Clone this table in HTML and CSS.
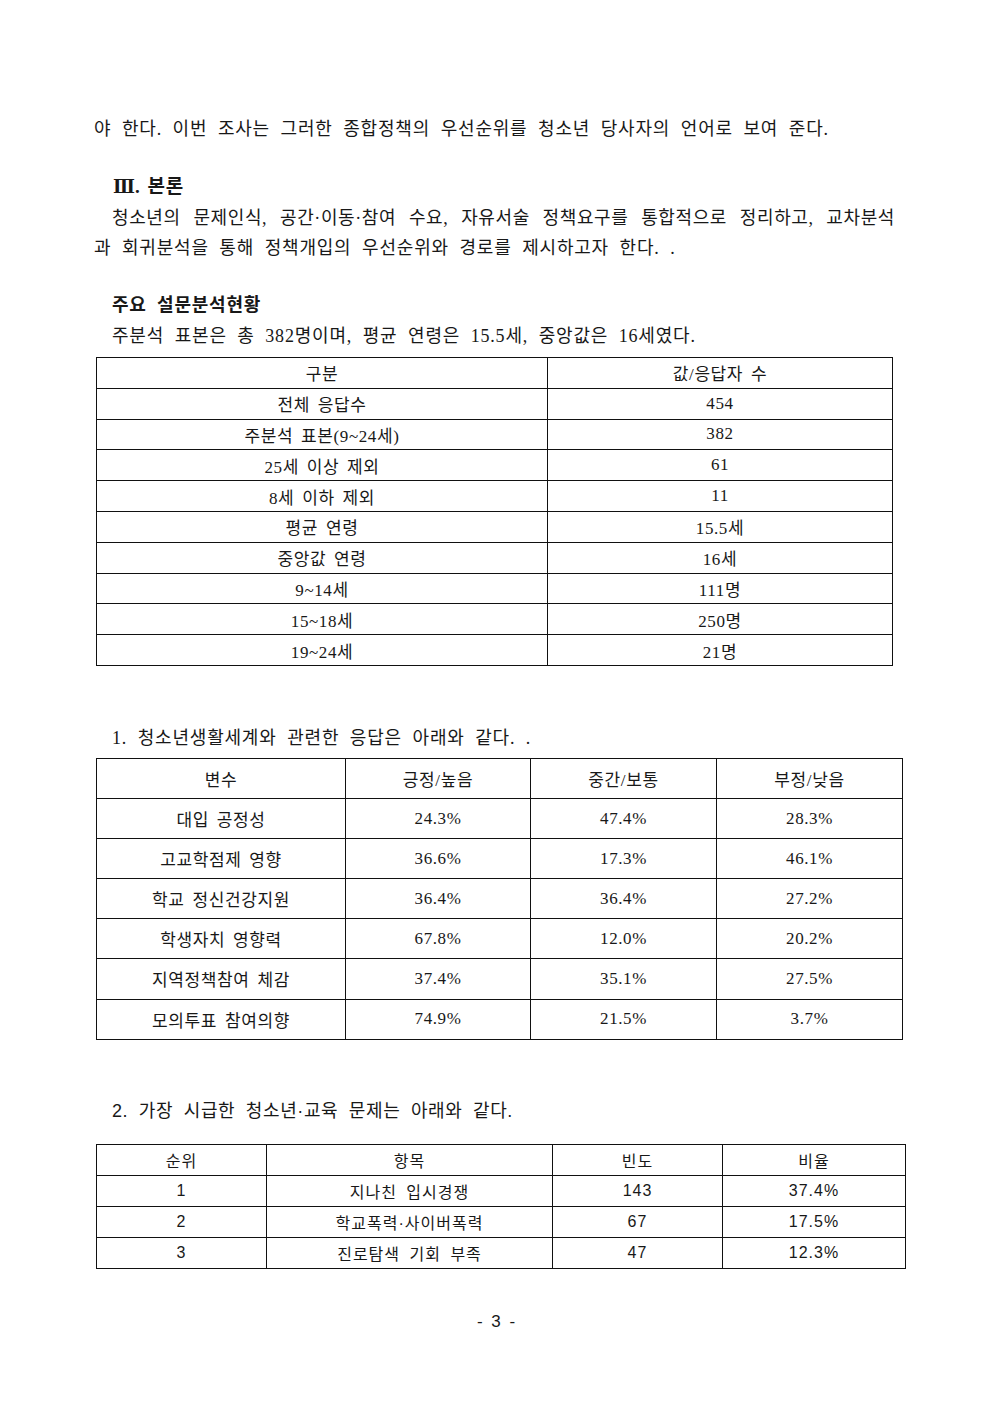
FILE: index.html
```html
<!DOCTYPE html>
<html lang="ko">
<head>
<meta charset="utf-8">
<title>청소년 설문 분석 - 3</title>
<link rel="stylesheet" href="styles.css">
</head>
<body>
<div class="page">
  <p class="line">야 한다. 이번 조사는 그러한 종합정책의 우선순위를 청소년 당사자의 언어로 보여 준다.</p>

  <h2 class="sec"><span class="roman">Ⅲ</span>. 본론</h2>
  <p class="line indent justify">청소년의 문제인식, 공간·이동·참여 수요, 자유서술 정책요구를 통합적으로 정리하고, 교차분석</p>
  <p class="line">과 회귀분석을 통해 정책개입의 우선순위와 경로를 제시하고자 한다. .</p>

  <h3 class="sub">주요 설문분석현황</h3>
  <p class="line indent">주분석 표본은 총 382명이며, 평균 연령은 15.5세, 중앙값은 16세였다.</p>

  <table class="tbl t1">
    <colgroup><col class="t1c1"><col class="t1c2"></colgroup>
    <tr><td>구분</td><td>값/응답자 수</td></tr>
    <tr><td>전체 응답수</td><td>454</td></tr>
    <tr><td>주분석 표본(9~24세)</td><td>382</td></tr>
    <tr><td>25세 이상 제외</td><td>61</td></tr>
    <tr><td>8세 이하 제외</td><td>11</td></tr>
    <tr><td>평균 연령</td><td>15.5세</td></tr>
    <tr><td>중앙값 연령</td><td>16세</td></tr>
    <tr><td>9~14세</td><td>111명</td></tr>
    <tr><td>15~18세</td><td>250명</td></tr>
    <tr><td>19~24세</td><td>21명</td></tr>
  </table>

  <p class="line indent cap1">1. 청소년생활세계와 관련한 응답은 아래와 같다. .</p>

  <table class="tbl t2">
    <colgroup><col class="t2c1"><col class="t2c2"><col class="t2c3"><col class="t2c4"></colgroup>
    <tr><td>변수</td><td>긍정/높음</td><td>중간/보통</td><td>부정/낮음</td></tr>
    <tr><td>대입 공정성</td><td>24.3%</td><td>47.4%</td><td>28.3%</td></tr>
    <tr><td>고교학점제 영향</td><td>36.6%</td><td>17.3%</td><td>46.1%</td></tr>
    <tr><td>학교 정신건강지원</td><td>36.4%</td><td>36.4%</td><td>27.2%</td></tr>
    <tr><td>학생자치 영향력</td><td>67.8%</td><td>12.0%</td><td>20.2%</td></tr>
    <tr><td>지역정책참여 체감</td><td>37.4%</td><td>35.1%</td><td>27.5%</td></tr>
    <tr><td>모의투표 참여의향</td><td>74.9%</td><td>21.5%</td><td>3.7%</td></tr>
  </table>

  <p class="line indent cap2">2. 가장 시급한 청소년·교육 문제는 아래와 같다.</p>

  <table class="tbl t3">
    <colgroup><col class="t3c1"><col class="t3c2"><col class="t3c3"><col class="t3c4"></colgroup>
    <tr><td>순위</td><td>항목</td><td>빈도</td><td>비율</td></tr>
    <tr><td>1</td><td>지나친 입시경쟁</td><td>143</td><td>37.4%</td></tr>
    <tr><td>2</td><td>학교폭력·사이버폭력</td><td>67</td><td>17.5%</td></tr>
    <tr><td>3</td><td>진로탐색 기회 부족</td><td>47</td><td>12.3%</td></tr>
  </table>

  <div class="pagenum">- 3 -</div>
</div>
</body>
</html>
```

FILE: styles.css
```css
* { box-sizing: border-box; }

html, body {
  margin: 0;
  padding: 0;
  background: #ffffff;
}

body {
  font-family: "Liberation Serif", "Noto Sans CJK KR", serif;
  color: #181818;
}

.page {
  width: 992px;
  padding: 114px 97px 0 94px;
}

.line {
  margin: 0;
  height: 30px;
  line-height: 30px;
  font-size: 18px;
  letter-spacing: 0.8px;
  word-spacing: 5.3px;
  white-space: nowrap;
}

.indent { padding-left: 18px; }

.justify {
  margin-top: 1px;
  text-align: justify;
  text-align-last: justify;
  white-space: normal;
  letter-spacing: 0.6px;
}

.sec {
  margin: 28px 0 0 0;
  padding-left: 19px;
  height: 30px;
  line-height: 30px;
  font-size: 19px;
  font-weight: bold;
  letter-spacing: 0.6px;
  word-spacing: 2px;
}

.roman {
  font-family: "DejaVu Serif", "Liberation Serif", serif;
  font-size: 18px;
  letter-spacing: 0;
}

.sub {
  margin: 27px 0 0 0;
  padding-left: 18px;
  height: 30px;
  line-height: 30px;
  font-size: 18px;
  font-weight: bold;
  letter-spacing: 0.8px;
  word-spacing: 5px;
}

.sub + .line { margin-top: 1px; }

.tbl {
  border-collapse: collapse;
  margin-left: 2px;
  table-layout: fixed;
  font-size: 17px;
  letter-spacing: 0.6px;
  word-spacing: 3px;
}

.tbl td {
  border: 1px solid #111;
  text-align: center;
  padding: 0;
  white-space: nowrap;
}

.t1 { margin-top: 6px; width: 796px; }
.t1 td { height: 30.8px; }
.t1c1 { width: 451px; }
.t1c2 { width: 345px; }

.cap1 { margin-top: 57px; }

.t2 { margin-top: 5px; width: 806px; }
.t2 td { height: 40.1px; }
.t2c1 { width: 249px; }
.t2c2 { width: 185px; }
.t2c3 { width: 186px; }
.t2c4 { width: 186px; }

.cap2 {
  margin-top: 56px;
  font-family: "Liberation Sans", "Noto Sans CJK KR", sans-serif;
  letter-spacing: 0.6px;
  word-spacing: 5px;
}

.t3 {
  margin-top: 18px;
  width: 809px;
  font-family: "Liberation Sans", "Noto Sans CJK KR", sans-serif;
  font-size: 16px;
  letter-spacing: 1px;
  word-spacing: 4px;
}
.t3 td { height: 31px; }
.t3c1 { width: 170px; }
.t3c2 { width: 286px; }
.t3c3 { width: 170px; }
.t3c4 { width: 183px; }

.pagenum {
  margin: 38px 0 0 -94px;
  width: 992px;
  height: 30px;
  line-height: 30px;
  text-align: center;
  font-family: "Liberation Sans", "Noto Sans CJK KR", sans-serif;
  font-size: 17px;
  word-spacing: 4px;
}
```
